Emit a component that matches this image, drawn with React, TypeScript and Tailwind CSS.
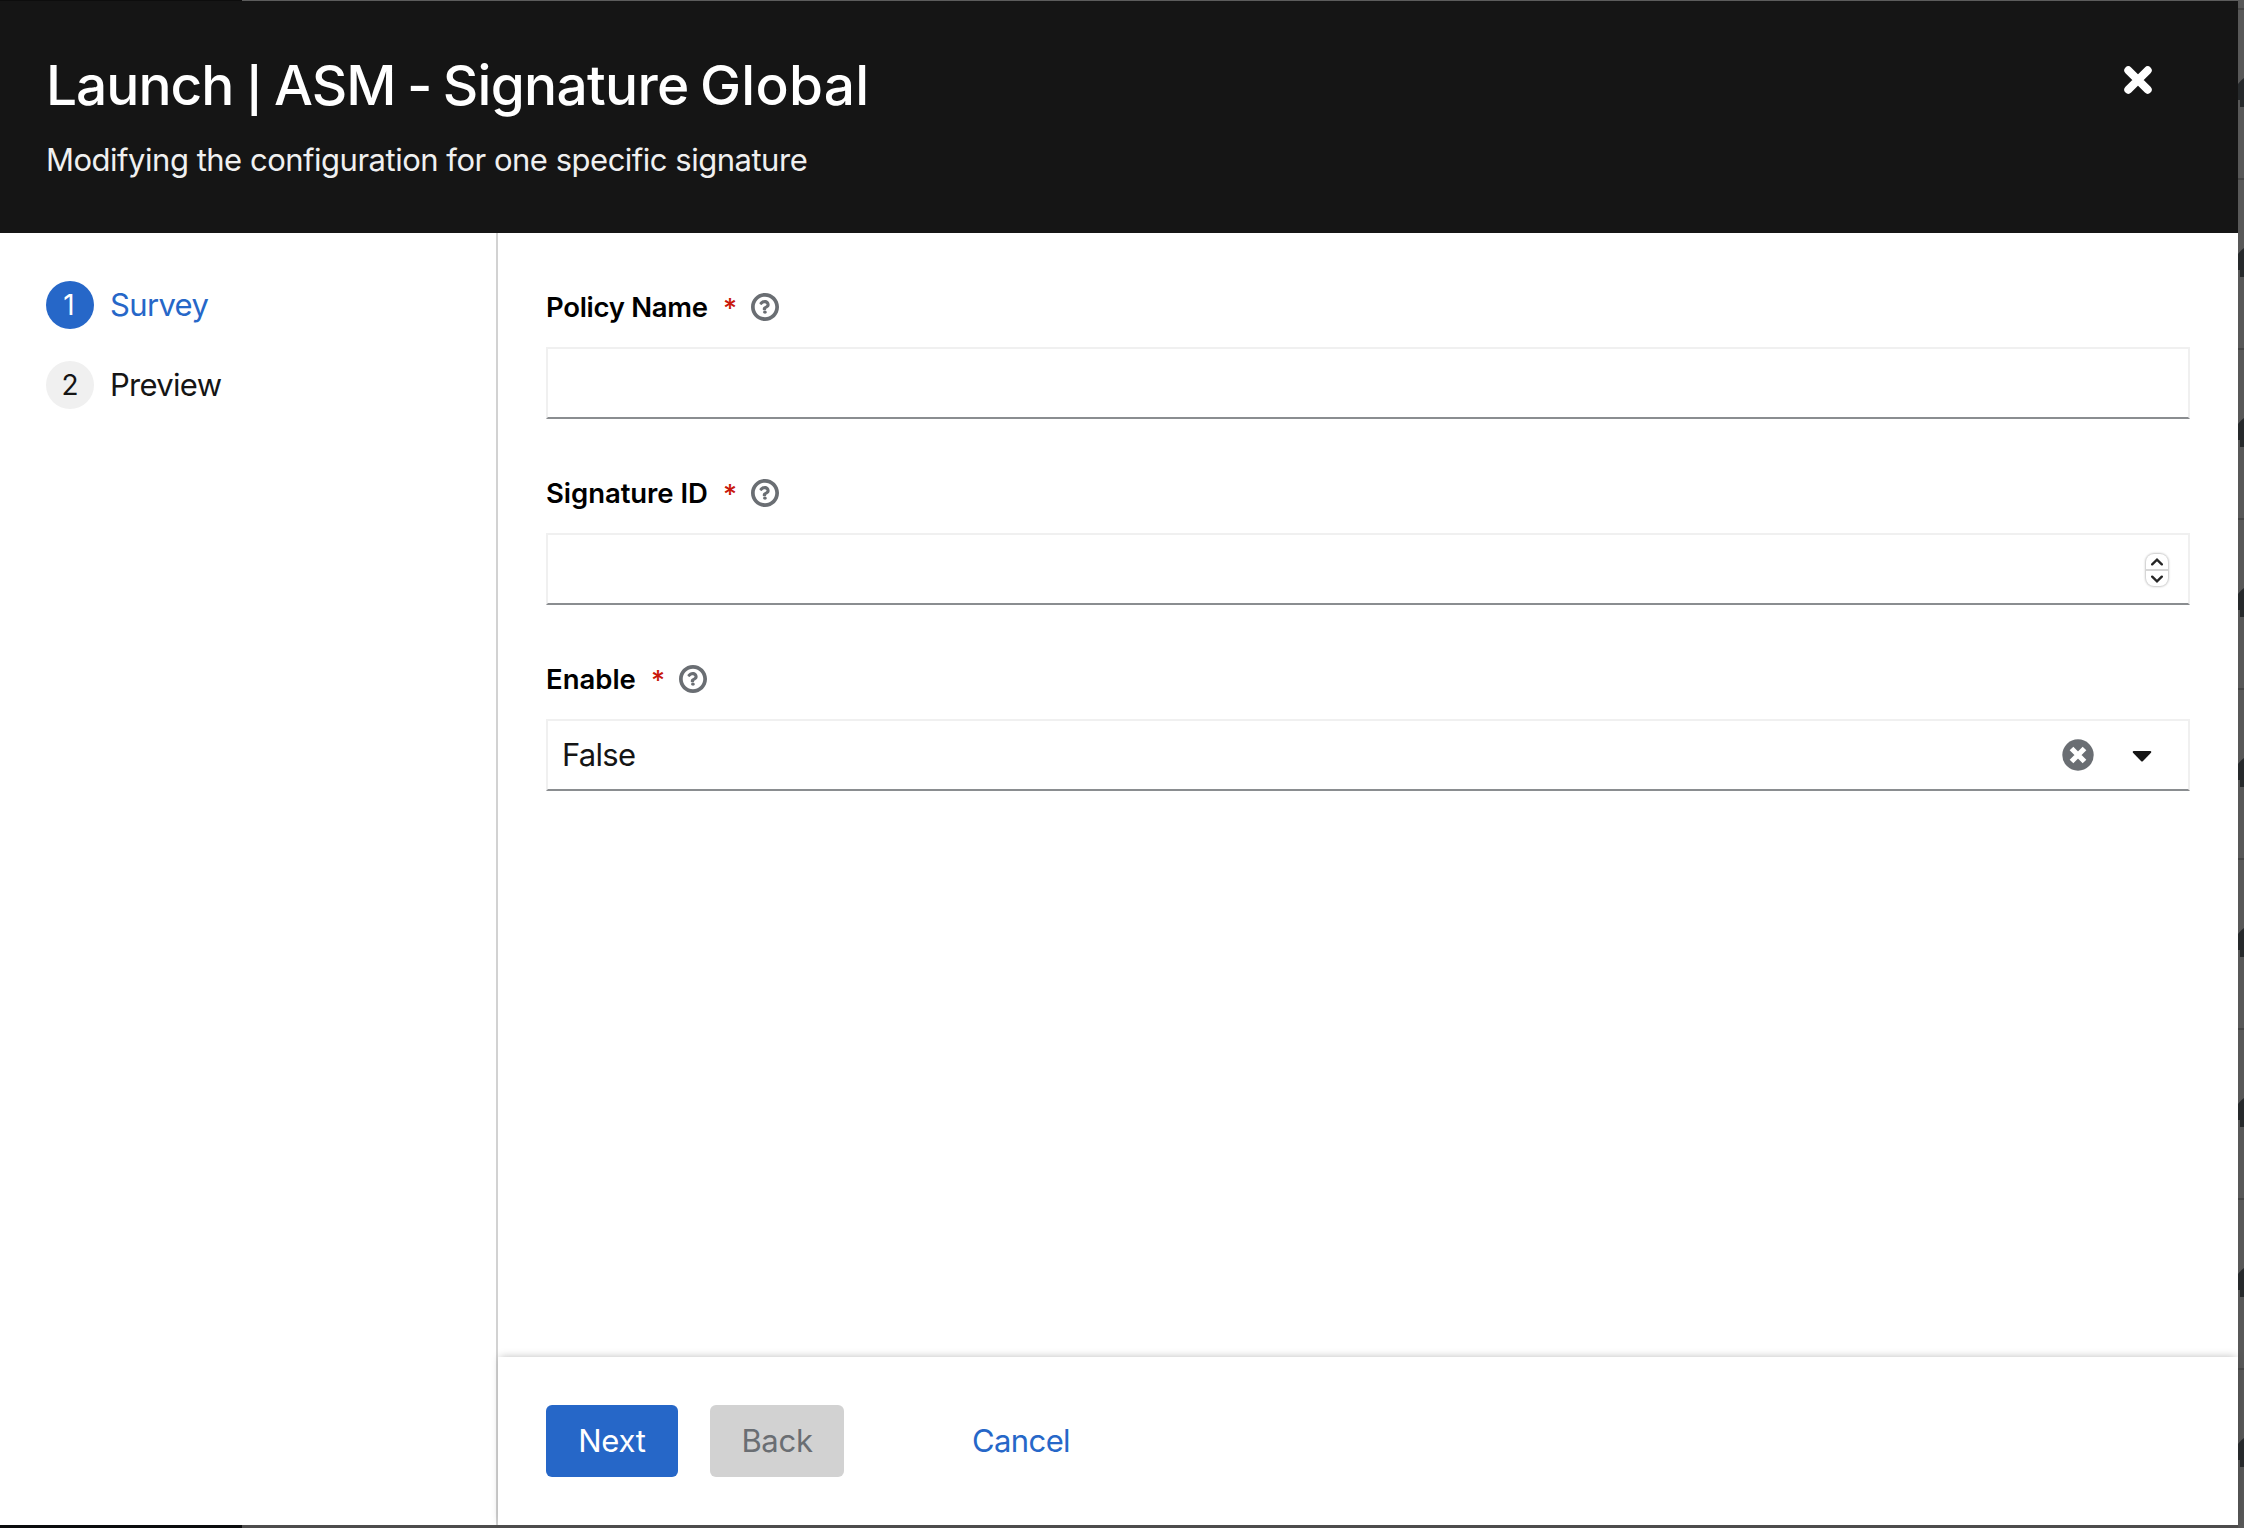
import React from "react";

function HelpIcon() {
  return (
    <svg viewBox="0 0 512 512" className="size-7 shrink-0 fill-[#6a6e73]" aria-label="More information">
      <path d="M256 0C115 0 0 115 0 256s115 256 256 256 256-115 256-256S397 0 256 0zm0 444c-104 0-188-84-188-188S152 68 256 68s188 84 188 188-84 188-188 188z" />
      <path
        transform="translate(33 33) scale(0.88)"
        d="M350 207c0 68-73 69-73 94v2c0 9-7 16-16 16h-38c-9 0-16-7-16-16v-7c0-36 28-51 49-62 18-10 29-17 29-31 0-18-23-30-42-30-24 0-36 12-51 31-6 7-16 9-23 3l-24-18c-7-5-9-15-4-22 27-38 62-60 110-60 51 0 99 40 99 100zM290 365c0 20-16 30-36 30s-40-10-40-30c0-22 18-32 38-32s38 10 38 32z"
      />
    </svg>
  );
}

function Step({ number, label, active }: { number: number; label: string; active?: boolean }) {
  return (
    <li className="flex h-12 items-center gap-4">
      <span
        className={
          active
            ? "flex size-12 items-center justify-center rounded-full bg-[#2667c8] pr-0.5 text-[28px] text-white"
            : "flex size-12 items-center justify-center rounded-full bg-[#f0f0f0] text-[28px] text-[#151515]"
        }
      >
        {number}
      </span>
      <span
        className={
          active
            ? "text-[31px] tracking-[-0.65px] text-[#2667c8]"
            : "text-[31px] tracking-[-0.7px] text-[#151515]"
        }
      >
        {label}
      </span>
    </li>
  );
}

function Field({
  label,
  labelClass,
  children,
}: {
  label: string;
  labelClass: string;
  children?: React.ReactNode;
}) {
  return (
    <div className="mb-[50px]">
      <div className="mb-4 flex h-12 items-center">
        <span className={`pt-0.5 text-[27.5px] font-semibold whitespace-nowrap text-black ${labelClass}`}>{label}</span>
        <span className="w-7 pt-0.5 text-[27px] leading-none font-medium text-[#c9190b]">*</span>
        <HelpIcon />
      </div>
      <div className="flex h-[72px] items-center border-2 border-[#f0f0f0] border-b-[#8a8d90] bg-white">
        {children}
      </div>
    </div>
  );
}

function Stepper() {
  return (
    <div className="mt-0.5 mr-5 ml-auto flex h-8 w-[22px] flex-col rounded-[8px] bg-white shadow-[0_0_2px_1px_rgba(0,0,0,0.22)]">
      <div className="flex flex-1 items-center justify-center border-b-2 border-[#d6d6d6]">
        <svg viewBox="0 0 12 8" className="h-2 w-3 fill-none stroke-[#262626] stroke-[2.4]">
          <path d="M1.2 6.3 6 1.7l4.8 4.6" strokeLinecap="round" />
        </svg>
      </div>
      <div className="flex flex-1 items-center justify-center">
        <svg viewBox="0 0 12 8" className="h-2 w-3 fill-none stroke-[#262626] stroke-[2.4]">
          <path d="M1.2 1.7 6 6.3l4.8-4.6" strokeLinecap="round" />
        </svg>
      </div>
    </div>
  );
}

function BackdropRow() {
  return (
    <div className="h-[170px] w-1.5 shrink-0 border-t-2 border-[#464646] pt-[68px]">
      <svg viewBox="0 0 6 29" className="h-[29px] w-1.5 fill-[#26292b]">
        <path d="M6 0C4 1.5 1.5 4 0 6v16h2v7h4z" />
      </svg>
    </div>
  );
}

export default function App() {
  return (
    <div className="flex h-[1528px] w-[2244px] overflow-hidden bg-[#585858] font-['Inter',sans-serif]">
      <div className="flex w-[2238px] flex-col">
        <div className="flex h-px shrink-0">
          <div className="w-[242px] bg-[#0d0d0d]" />
          <div className="flex-1 bg-[#5c5c5c]" />
        </div>
        <header className="flex h-[232px] shrink-0 justify-between bg-[#151515] pl-[46px] text-white">
          <div>
            <h1 className="mt-[48px] text-[55px] leading-[72px] font-medium tracking-[-1px] whitespace-nowrap [word-spacing:-2.3px]">
              Launch <span className="inline-block origin-[50%_88%] scale-y-[0.8]">|</span> ASM -{" "}
              <span className="tracking-[-0.7px]">Signature</span>{" "}
              <span className="tracking-[0.3px]">Global</span>
            </h1>
            <p className="mt-[15px] text-[31px] leading-[48px] tracking-[-0.49px] whitespace-nowrap text-[#f0f0f0]">
              Modifying the configuration for one specific signature
            </p>
          </div>
          <button aria-label="Close" className="mt-[65px] mr-[86px] size-7">
            <svg viewBox="0 0 28 28" className="size-7 stroke-white stroke-[8]">
              <path d="M4.3 4.3 23.7 23.7M23.7 4.3 4.3 23.7" strokeLinecap="round" />
            </svg>
          </button>
        </header>
        <div className="flex h-[1292px] shrink-0 bg-white">
          <nav className="w-[498px] shrink-0 border-r-2 border-[#d2d2d2] pt-12 pl-[46px]">
            <ol className="flex flex-col gap-8">
              <Step number={1} label="Survey" active />
              <Step number={2} label="Preview" />
            </ol>
          </nav>
          <div className="flex flex-1 flex-col">
            <main className="flex-1 overflow-hidden pt-[50px] pr-12 pl-12">
              <Field label="Policy Name" labelClass="w-[177px] tracking-[-0.3px]" />
              <Field label="Signature ID" labelClass="w-[177px] tracking-[-0.05px]">
                <Stepper />
              </Field>
              <Field label="Enable" labelClass="w-[105px] tracking-[0px]">
                <span className="ml-3.5 text-[31px] tracking-[-0.7px] text-[#151515]">False</span>
                <svg viewBox="0 0 32 32" className="ml-auto size-8">
                  <circle cx="16" cy="16" r="15.7" className="fill-[#6a6e73]" />
                  <path d="m9.500 9.500 13 13m0-13-13 13" className="stroke-white stroke-[5.2]" />
                </svg>
                <svg viewBox="0 0 20 12" className="mt-0.5 mr-9 ml-[38px] h-3 w-5 fill-[#151515]">
                  <path d="M1.7 1h16.600c.9 0 1.300 1 .7 1.700l-8 8.200a1.400 1.400 0 0 1-2 0L1 2.700C.4 2 .8 1 1.700 1z" />
                </svg>
              </Field>
            </main>
            <footer className="flex h-[168px] shrink-0 items-start bg-white pt-12 pl-12 text-[31px] shadow-[0_-2px_8px_-2px_rgba(3,3,3,0.26)]">
              <button className="h-[72px] w-[132px] rounded-md bg-[#2667c8] tracking-[-0.2px] text-white">Next</button>
              <button className="ml-8 h-[72px] w-[134px] rounded-md bg-[#d2d2d2] tracking-[-0.3px] text-[#6a6e73]">
                Back
              </button>
              <button className="ml-24 h-[72px] w-[162px] tracking-[-0.6px] text-[#2667c8]">Cancel</button>
            </footer>
          </div>
        </div>
        <div className="flex h-[3px] shrink-0">
          <div className="w-[242px] bg-[#0b0c0d]" />
          <div className="flex-1 bg-[#4d4c4c]" />
        </div>
      </div>
      <div className="flex w-1.5 flex-col pt-2">
        {[0, 1, 2, 3, 4, 5, 6, 7, 8].map((row) => (
          <BackdropRow key={row} />
        ))}
      </div>
    </div>
  );
}
